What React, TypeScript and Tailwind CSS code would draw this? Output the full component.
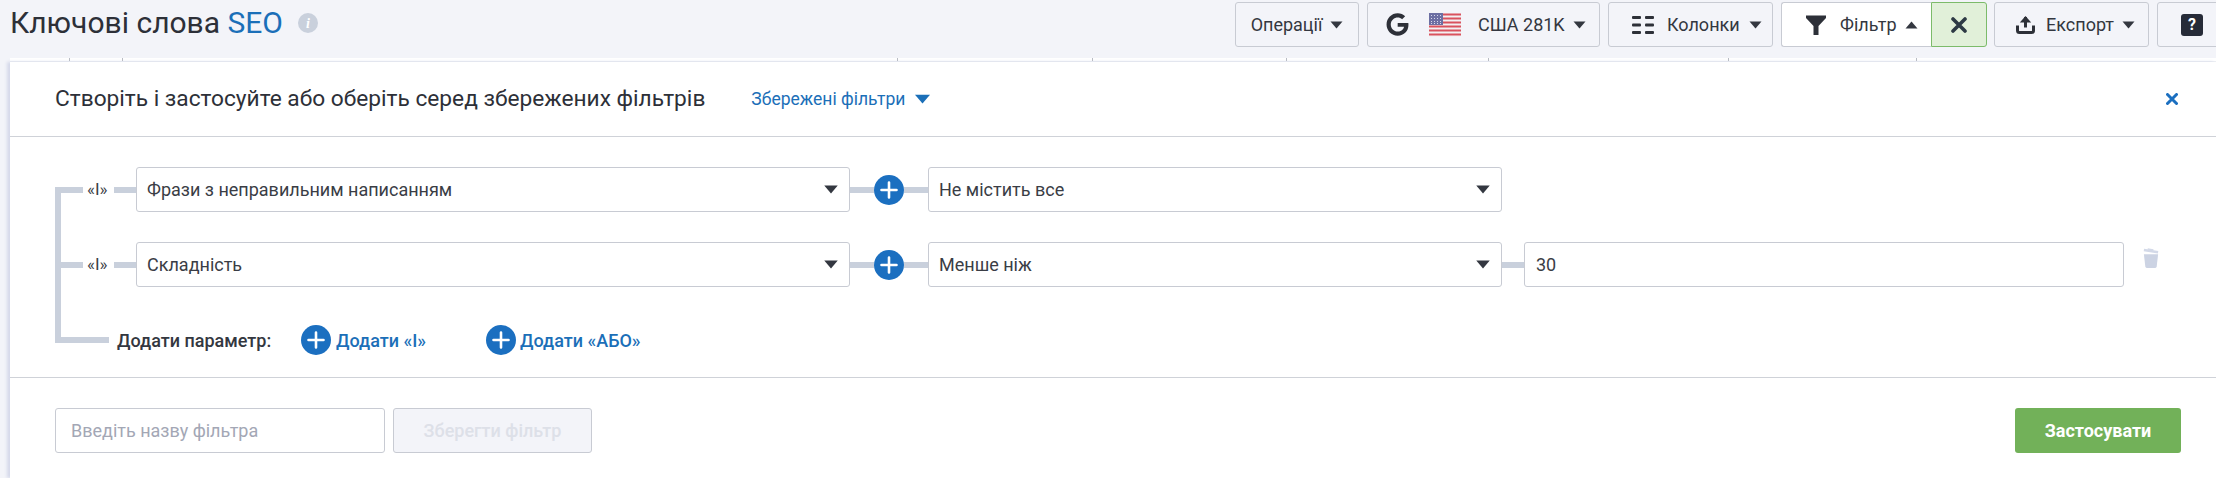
import React from "react";
import { FaGoogle } from "react-icons/fa";

const Caret = ({ up = false, className = "" }: { up?: boolean; className?: string }) => (
  <svg width="13" height="8" viewBox="0 0 13 8" className={className}>
    <path d={up ? "M6.5 0.5 L12.5 7.5 H0.5 Z" : "M0.5 0.5 H12.5 L6.5 7.5 Z"} fill="currentColor" />
  </svg>
);

const ToolButton = ({ children, className = "" }: { children: React.ReactNode; className?: string }) => (
  <div className={`flex h-[45px] shrink-0 items-center rounded-[3px] border border-[#c8cbd3] bg-[#f3f4f9] text-[18px] text-[#333740] ${className}`}>
    {children}
  </div>
);

const Flag = () => (
  <svg width="32" height="24" viewBox="0 0 32 24">
    <rect width="32" height="24" rx="2" fill="#f3f0f2" />
    {[0, 4, 8, 12, 16, 20].map((y) => (
      <rect key={y} y={y + 0.5} width="32" height="2" fill="#d9525e" />
    ))}
    <rect width="14" height="12" fill="#6c6fa3" />
    {[2, 5, 8, 11].map((x) =>
      [2, 5, 8, 10].map((y) => <rect key={`${x}-${y}`} x={x} y={y} width="1" height="1" fill="#d6d7ea" />)
    )}
  </svg>
);

const PlusCircle = () => (
  <div className="flex h-[30px] w-[30px] shrink-0 items-center justify-center rounded-full bg-[#1b6fc0]">
    <svg width="18" height="18" viewBox="0 0 18 18">
      <path d="M9 1.5 V16.5 M1.5 9 H16.5" stroke="#fff" strokeWidth="2.6" strokeLinecap="round" />
    </svg>
  </div>
);

const Select = ({ label, className }: { label: string; className: string }) => (
  <div className={`flex h-[45px] shrink-0 items-center justify-between rounded-[3px] border border-[#c8cbd3] bg-white pl-[10px] pr-[10px] text-[18px] text-[#3a3d45] ${className}`}>
    <span>{label}</span>
    <Caret className="h-[9px] w-[16px] text-[#333740]" />
  </div>
);

const Link = ({ className }: { className: string }) => (
  <div className={`h-[6px] shrink-0 bg-[#c9d0dc] ${className}`} />
);

const Row = ({ field, op, value }: { field: string; op: string; value?: string }) => (
  <div className="flex h-[45px] items-center">
    <Link className="w-[28px]" />
    <span className="w-[31px] pl-[4px] text-[17px] text-[#3a3d45]">«І»</span>
    <Link className="w-[22px]" />
    <Select label={field} className="w-[714px]" />
    <Link className="w-[24px]" />
    <PlusCircle />
    <Link className="w-[24px]" />
    <Select label={op} className="w-[574px]" />
    {value && (
      <>
        <Link className="w-[22px]" />
        <div className="flex h-[45px] w-[600px] shrink-0 items-center rounded-[3px] border border-[#c8cbd3] bg-white pl-[11px] text-[18px] text-[#3a3d45]">
          {value}
        </div>
        <svg width="18" height="22" viewBox="0 0 19 22" className="ml-[18px] -translate-y-[7px]">
          <path d="M2 2.5 L17 5" stroke="#d3d9e8" strokeWidth="2.6" />
          <path d="M6 1.5 L12 2.5" stroke="#d3d9e8" strokeWidth="1.6" />
          <path d="M2 7 H17 L15.5 20 Q15.3 21.5 14 21.5 H5 Q3.7 21.5 3.5 20 Z" fill="#ccd3e3" />
        </svg>
      </>
    )}
  </div>
);

export default function App() {
  return (
    <div className="h-[478px] w-[2216px] overflow-hidden bg-[#f3f4f9] font-['Roboto',sans-serif]">
      <header className="flex h-[58px] items-start justify-between">
        <div className="flex h-[46px] items-center pl-[10px]">
          <h1 className="text-[30px] font-normal leading-none text-[#2d3038]">
            Ключові слова <span className="text-[#1b6fb8]">SEO</span>
          </h1>
          <div className="ml-[15px] flex h-[20px] w-[20px] items-center justify-center rounded-full bg-[#c9d0dc] font-['Liberation_Serif',serif] text-[14px] font-bold italic text-white">
            i
          </div>
        </div>
        <div className="flex w-[981px] shrink-0 gap-[8px] pt-[2px]">
          <ToolButton className="w-[124px] justify-center gap-[8px]">
            Операції <Caret />
          </ToolButton>
          <ToolButton className="w-[233px] pl-[18px]">
            <FaGoogle className="h-[23px] w-[23px] text-[#2d3038]" />
            <span className="ml-[20px]"><Flag /></span>
            <span className="ml-[17px]">США 281K</span>
            <Caret className="ml-[8px]" />
          </ToolButton>
          <ToolButton className="w-[165px] pl-[23px]">
            <svg width="22" height="20" viewBox="0 0 22 20" fill="#2d3038">
              <rect x="0" y="1" width="9" height="3" rx="1" />
              <rect x="13" y="1" width="9" height="3" rx="1" />
              <rect x="0" y="8.5" width="9" height="3" rx="1" />
              <rect x="13" y="8.5" width="9" height="3" rx="1" />
              <rect x="0" y="16" width="9" height="3" rx="1" />
              <rect x="13" y="16" width="9" height="3" rx="1" />
            </svg>
            <span className="ml-[13px]">Колонки</span>
            <Caret className="ml-[9px]" />
          </ToolButton>
          <div className="flex shrink-0">
            <ToolButton className="w-[150px] rounded-r-none border-r-0 bg-white pl-[24px]">
              <svg width="20" height="20" viewBox="0 0 20 20" fill="#2d3038">
                <path d="M0 0.5 H20 V3 L12.5 11 V20 H7.5 V11 L0 3 Z" />
              </svg>
              <span className="ml-[14px]">Фільтр</span>
              <Caret up className="ml-[8px]" />
            </ToolButton>
            <div className="flex h-[45px] w-[56px] items-center justify-center rounded-r-[3px] border border-[#7cbb6a] bg-[#e1f0d9]">
              <svg width="16" height="16" viewBox="0 0 16 16">
                <path d="M2 2 L14 14 M14 2 L2 14" stroke="#2d3a45" strokeWidth="3.6" strokeLinecap="round" />
              </svg>
            </div>
          </div>
          <ToolButton className="-ml-px w-[155px] pl-[21px]">
            <svg width="19" height="19" viewBox="0 0 19 19" fill="none">
              <path d="M9.5 2 L9.5 12.5" stroke="#2d3038" strokeWidth="3" />
              <path d="M3.8 7.5 L9.5 1 L15.2 7.5 Z" fill="#2d3038" />
              <path d="M1.5 10.5 V15.5 Q1.5 17.5 3.5 17.5 H15.5 Q17.5 17.5 17.5 15.5 V10.5" stroke="#2d3038" strokeWidth="3" />
            </svg>
            <span className="ml-[11px]">Експорт</span>
            <Caret className="ml-[8px]" />
          </ToolButton>
          <ToolButton className="w-[80px] pl-[23px]">
            <span className="flex h-[22px] w-[22px] items-center justify-center rounded-[3px] bg-[#262b38] text-[16px] font-bold text-white">?</span>
          </ToolButton>
        </div>
      </header>

      <div className="ml-[10px] flex h-[4px] border-b border-[#eceef3] bg-white">
        {[60, 53, 775, 195, 194, 202, 240, 188, 299].map((w, i) => (
          <div key={i} className={`h-full shrink-0 ${i < 8 ? "border-r border-[#b9bcc4]" : ""}`} style={{ width: w }} />
        ))}
      </div>

      <main className="ml-[10px] h-[416px] bg-white shadow-[-3px_0_3px_#d5d9ea]">
        <div className="flex h-[75px] items-center justify-between border-b border-[#cfd2d8] pl-[45px] pr-[38px]">
          <div className="flex items-center">
            <h2 className="text-[22.7px] font-normal text-[#2d3038]">Створіть і застосуйте або оберіть серед збережених фільтрів</h2>
            <div className="ml-[46px] flex items-center gap-[9px] text-[17.5px] text-[#1b6fb8]">
              Збережені фільтри <Caret className="h-[10px] w-[17px]" />
            </div>
          </div>
          <svg width="12" height="12" viewBox="0 0 12 12">
            <path d="M1.5 1.5 L10.5 10.5 M10.5 1.5 L1.5 10.5" stroke="#1b6fc0" strokeWidth="3" strokeLinecap="round" />
          </svg>
        </div>

        <div className="relative h-[240px] pl-[45px] pt-[30px]">
          <div className="absolute left-[45px] top-[50px] h-[156px] w-[6px] bg-[#c9d0dc]" />
          <div className="flex flex-col gap-[30px]">
            <Row field="Фрази з неправильним написанням" op="Не містить все" />
            <Row field="Складність" op="Менше ніж" value="30" />
          </div>
          <div className="mt-[38px] flex h-[30px] items-center">
            <Link className="w-[54px]" />
            <span className="ml-[8px] w-[184px] text-[18px] font-medium text-[#333740]">Додати параметр:</span>
            <PlusCircle />
            <span className="ml-[5px] w-[150px] text-[18px] font-medium text-[#1b6fb8]">Додати «І»</span>
            <PlusCircle />
            <span className="ml-[4px] text-[18px] font-medium text-[#1b6fb8]">Додати «АБО»</span>
          </div>
        </div>

        <div className="flex items-start justify-between border-t border-[#cfd2d8] pl-[45px] pr-[35px] pt-[30px]">
          <div className="flex gap-[8px]">
            <div className="flex h-[45px] w-[330px] items-center rounded-[3px] border border-[#c8cbd3] bg-white pl-[15px] text-[18px] text-[#a3a7b5]">
              Введіть назву фільтра
            </div>
            <div className="flex h-[45px] w-[199px] items-center justify-center rounded-[3px] border border-[#c8cbd3] bg-[#f3f4f9] text-[18px] font-medium text-[#dde0e8]">
              Зберегти фільтр
            </div>
          </div>
          <div className="flex h-[45px] w-[166px] items-center justify-center rounded-[3px] bg-[#72b159] text-[18px] font-bold text-white">
            Застосувати
          </div>
        </div>
      </main>
    </div>
  );
}
